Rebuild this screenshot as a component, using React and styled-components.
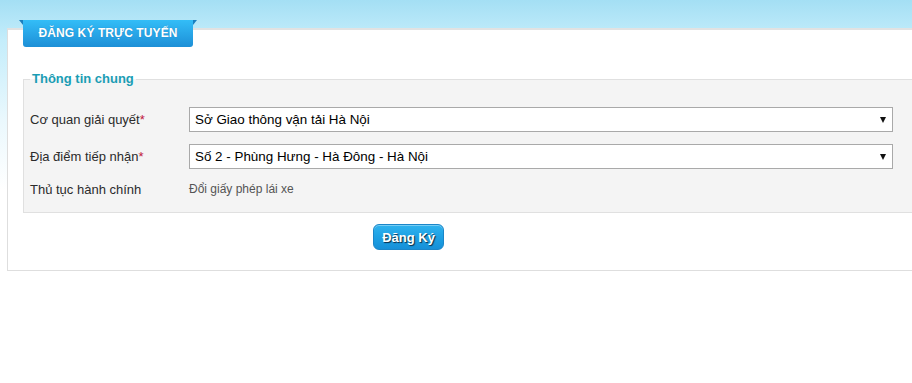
import React from "react";
import styled, { createGlobalStyle } from "styled-components";

const GlobalStyle = createGlobalStyle`
  html, body { margin: 0; padding: 0; }
  body {
    background: linear-gradient(to bottom, #a4dff4 0px, #c4edfb 40px, #eaf8fd 120px, #ffffff 190px) no-repeat;
    background-color: #fff;
    min-height: 383px;
    overflow: hidden;
    font-family: Arial, "Liberation Sans", sans-serif;
  }
`;

const Page = styled.div`
  padding: 28px 0 0 7px;
`;

const Panel = styled.div`
  width: 980px;
  background: #fff;
  border: 1px solid #dedede;
  border-top: 2px solid #e2e2e2;
  padding-bottom: 20px;
`;

const Tab = styled.div`
  position: relative;
  width: 170px;
  height: 27px;
  margin: -10px 0 0 15px;
  box-sizing: border-box;
  background: linear-gradient(to bottom, #33bdf7 0%, #27a4e6 55%, #1d8fd6 100%);
  border-radius: 0 0 3px 3px;
  color: #fff;
  font-weight: bold;
  font-size: 12px;
  line-height: 27px;
  text-align: center;
  letter-spacing: 0.1px;
  text-shadow: 0 0 1px rgba(0, 60, 110, 0.35);

  &::before,
  &::after {
    content: "";
    position: absolute;
    top: 0;
    width: 0;
    height: 0;
    border-style: solid;
  }
  &::before {
    left: -4px;
    border-width: 0 4px 5px 0;
    border-color: transparent #1a7fbf transparent transparent;
  }
  &::after {
    right: -4px;
    border-width: 0 0 5px 4px;
    border-color: transparent transparent transparent #1a7fbf;
  }
`;

const Fieldset = styled.fieldset`
  margin: 24px 0 0 15px;
  width: 940px;
  box-sizing: border-box;
  border: 1px solid #e0e0e0;
  background: #f4f4f4;
  padding: 20px 6px 15px 6px;
  display: flex;
  flex-direction: column;
  gap: 12px;
`;

const Legend = styled.legend`
  padding: 0 2px;
  color: #1a9db4;
  font-weight: bold;
  font-size: 13px;
  line-height: 16px;
`;

const Row = styled.div`
  display: grid;
  grid-template-columns: 159px 704px;
  align-items: center;
  min-height: ${(p) => (p.$compact ? "16px" : "25px")};
`;

const Label = styled.div`
  font-size: 13px;
  color: #2b2b2b;
  white-space: nowrap;
`;

const Req = styled.span`
  color: #c0143c;
`;

const SelectWrap = styled.div`
  position: relative;
  height: 25px;
`;

const Select = styled.select`
  appearance: none;
  -webkit-appearance: none;
  width: 100%;
  height: 25px;
  box-sizing: border-box;
  border: 1px solid #a9a9a9;
  border-radius: 0;
  background: #fff;
  padding: 0 20px 0 5px;
  font-family: Arial, "Liberation Sans", sans-serif;
  font-size: 13.4px;
  color: #000;
  outline: none;
`;

const Arrow = styled.span`
  position: absolute;
  right: 7px;
  top: 10px;
  width: 0;
  height: 0;
  border-left: 3.5px solid transparent;
  border-right: 3.5px solid transparent;
  border-top: 6px solid #111;
  pointer-events: none;
`;

const Value = styled.div`
  font-size: 12px;
  color: #555;
`;

const Actions = styled.div`
  padding: 11px 0 0 365px;
`;

const Button = styled.button`
  height: 26px;
  width: 71px;
  box-sizing: border-box;
  border: 1px solid #1b86c8;
  border-radius: 6px;
  background: linear-gradient(to bottom, #2fb3ee 0%, #1ea1e4 50%, #1690d8 100%);
  box-shadow: inset 0 1px 0 rgba(255, 255, 255, 0.35);
  color: #fff;
  font-family: Arial, "Liberation Sans", sans-serif;
  font-weight: bold;
  font-size: 13px;
  text-shadow: 1px 1px 1px #0b2a44;
  padding: 0;
  cursor: pointer;
`;

export default function App() {
  return (
    <>
      <GlobalStyle />
      <Page>
        <Panel>
          <Tab>ĐĂNG KÝ TRỰC TUYẾN</Tab>
          <Fieldset>
            <Legend>Thông tin chung</Legend>
            <Row>
              <Label>
                Cơ quan giải quyết<Req>*</Req>
              </Label>
              <SelectWrap>
                <Select defaultValue="1">
                  <option value="1">Sở Giao thông vận tải Hà Nội</option>
                </Select>
                <Arrow />
              </SelectWrap>
            </Row>
            <Row>
              <Label>
                Địa điểm tiếp nhận<Req>*</Req>
              </Label>
              <SelectWrap>
                <Select defaultValue="1">
                  <option value="1">Số 2 - Phùng Hưng - Hà Đông - Hà Nội</option>
                </Select>
                <Arrow />
              </SelectWrap>
            </Row>
            <Row $compact>
              <Label>Thủ tục hành chính</Label>
              <Value>Đổi giấy phép lái xe</Value>
            </Row>
          </Fieldset>
          <Actions>
            <Button type="button">Đăng Ký</Button>
          </Actions>
        </Panel>
      </Page>
    </>
  );
}
